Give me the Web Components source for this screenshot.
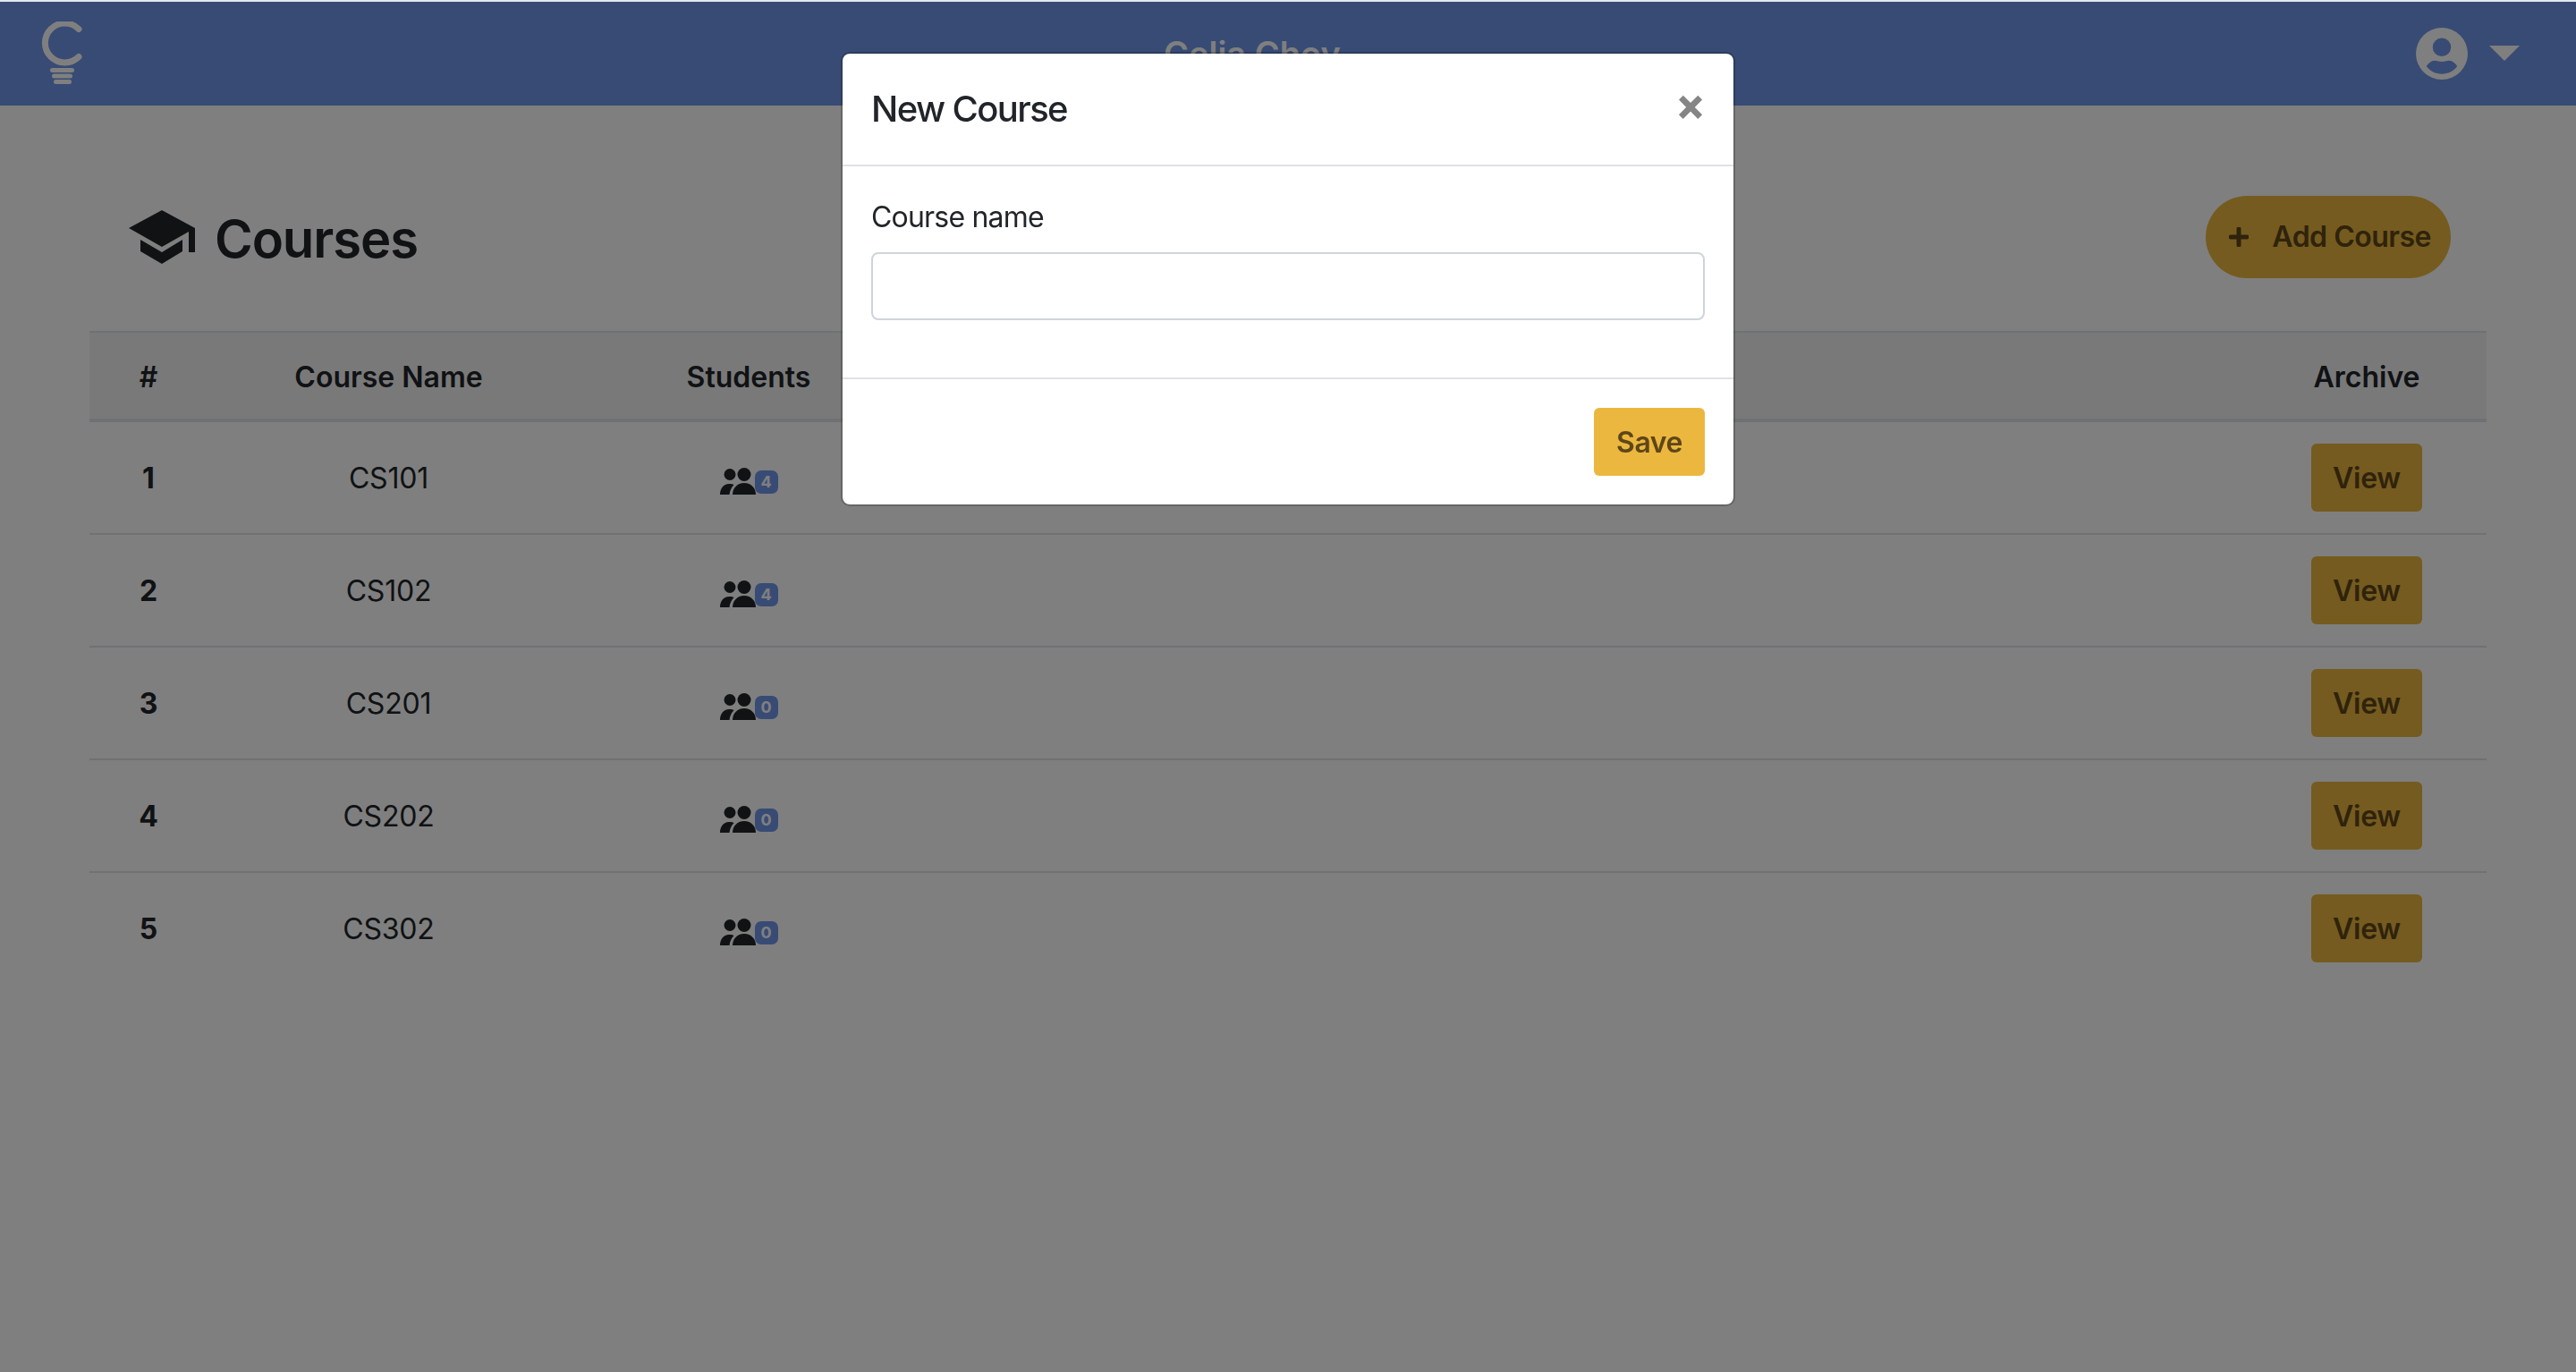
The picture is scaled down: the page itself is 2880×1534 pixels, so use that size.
<!DOCTYPE html>
<html>
<head>
<meta charset="utf-8">
<style>
html, body { margin: 0; height: 100%; }
body {
    background: #fff;
    border-top: 2px solid #e4e8ee;
    box-sizing: border-box;
    font-family: Inter, "Liberation Sans", sans-serif;
    font-size: 32px;
    line-height: 1.5;
    color: #212529;
    overflow: hidden;
}
</style>
</head>
<body>
<app-navbar name="Celia Chov"></app-navbar>
<course-page>
    <course-row num="1" name="CS101" students="4"></course-row>
    <course-row num="2" name="CS102" students="4"></course-row>
    <course-row num="3" name="CS201" students="0"></course-row>
    <course-row num="4" name="CS202" students="0"></course-row>
    <course-row num="5" name="CS302" students="0"></course-row>
</course-page>
<new-course-modal></new-course-modal>

<script>
class AppNavbar extends HTMLElement {
    constructor() {
        super();
        this.attachShadow({ mode: 'open' });
        this.shadowRoot.innerHTML = `
<style>
:host { display: block; }
nav {
    height: 116px;
    background: #6e96e9;
    display: grid;
    grid-template-columns: 1255px auto 1fr;
    align-items: center;
    padding: 0 63px 0 46px;
}
.logo { display: block; }
.name { color: #fff; font-weight: 600; font-size: 38px; line-height: 57px; }
.user { justify-self: end; display: flex; align-items: center; gap: 24px; }
svg { display: block; }
</style>
<nav>
    <svg class="logo" width="46" height="72" viewBox="0 0 46 72">
        <path d="M42 8.500A22 22 0 1 0 42 39.500" fill="none" stroke="#fff" stroke-width="7" stroke-linecap="round"/>
        <rect x="10" y="52" width="27" height="5" rx="2.500" fill="#fff"/>
        <rect x="12" y="58.500" width="23" height="5" rx="2.500" fill="#fff"/>
        <rect x="14" y="65" width="20" height="5" rx="2.500" fill="#fff"/>
    </svg>
    <span class="name"></span>
    <div class="user">
        <svg width="58" height="58" viewBox="0 0 58 58">
            <path fill="#fff" fill-rule="evenodd" d="M29 0a29 29 0 1 1 0 58a29 29 0 0 1 0-58zM29 11.500a10 10 0 1 0 0 20.500a10 10 0 0 0 0-20.500zM11.700 43C14 40 17 36.700 21 36.700C24 36.700 26 38 29 38C32 38 34 36.700 37 36.700C41 36.700 44 40 46.300 43C42 48.500 36 51.700 29 51.700C22 51.700 16 48.500 11.700 43z"/>
        </svg>
        <svg width="34" height="18" viewBox="0 0 34 18"><path d="M0 0h34L17 17z" fill="#fff"/></svg>
    </div>
</nav>`;
        this.shadowRoot.querySelector('.name').textContent = this.getAttribute('name');
    }
}

class CoursePage extends HTMLElement {
    constructor() {
        super();
        this.attachShadow({ mode: 'open' });
        this.shadowRoot.innerHTML = `
<style>
:host { display: block; padding: 0 100px; }
.top {
    display: flex;
    justify-content: space-between;
    align-items: center;
    height: 252px;
    padding: 48px 40px 0 44px;
    box-sizing: border-box;
}
h1 {
    display: flex;
    align-items: center;
    gap: 22px;
    margin: -2px 0 0;
    font-size: 58px;
    line-height: 84px;
    font-weight: 600;
    letter-spacing: -1.1px;
    color: #212529;
}
h1 svg { margin-top: -5px; }
button {
    display: flex;
    align-items: center;
    gap: 26px;
    height: 92px;
    padding: 0 22px 0 26px;
    border: 0;
    border-radius: 46px;
    background: #ebb73f;
    color: #5e4618;
    font: 600 32px Inter, "Liberation Sans", sans-serif;
    letter-spacing: -.5px;
    margin-top: -7px;
}
.head {
    display: grid;
    grid-template-columns: 132px 405px 400px 1fr 268px;
    border-top: 2px solid #dee2e6;
    border-bottom: 4px solid #dee2e6;
    background: #f2f2f2;
    font-weight: 600;
    text-align: center;
}
.head span { padding: 26px 0 22px; }
</style>
<div class="top">
    <h1>
        <svg width="74" height="60" viewBox="0 0 74 60"><path fill="#212529" d="M37 0L74 20L74 47H67V24L37 41L0 20zM13 33L37 47L60 33V46L37 60L13 46z"/></svg>
        Courses
    </h1>
    <button>
        <svg width="22" height="22" viewBox="0 0 22 22"><path d="M11 2v18M2 11h18" stroke="#5e4618" stroke-width="5" stroke-linecap="round"/></svg>
        Add Course
    </button>
</div>
<div class="head">
    <span>#</span><span>Course Name</span><span>Students</span><span></span><span>Archive</span>
</div>
<slot></slot>`;
    }
}

class CourseRow extends HTMLElement {
    constructor() {
        super();
        this.attachShadow({ mode: 'open' });
        this.shadowRoot.innerHTML = `
<style>
:host { display: block; }
:host(:not(:last-child)) .row { border-bottom: 2px solid #dee2e6; }
.row {
    display: grid;
    grid-template-columns: 132px 405px 400px 1fr 268px;
    align-items: center;
    text-align: center;
    height: 124px;
}
.num { font-weight: 700; padding-top: 2px; }
.name { padding-top: 2px; letter-spacing: -.2px; }
.students { display: flex; justify-content: center; align-items: center; padding-top: 8px; }
.badge {
    width: 26px;
    height: 26px;
    margin-left: -1px;
    border-radius: 7px;
    background: #7097ea;
    color: #fff;
    font-size: 18px;
    font-weight: 700;
    line-height: 26px;
    position: relative;
    top: 1px;
}
button {
    width: 124px;
    height: 76px;
    border: 0;
    border-radius: 6px;
    background: #ebb73f;
    color: #5e4618;
    font: 600 32px Inter, "Liberation Sans", sans-serif;
    letter-spacing: -.3px;
    justify-self: center;
}
svg { display: block; }
</style>
<div class="row">
    <span class="num"></span>
    <span class="name"></span>
    <div class="students">
        <svg width="40" height="31" viewBox="0 0 40 31">
            <circle cx="11" cy="7.500" r="6.500" fill="#212529"/>
            <circle cx="27" cy="7.500" r="7.500" fill="#212529"/>
            <path d="M0 30c0-7 4-12 10-12c3 0 5 .6 5.500 1.200C12.500 22 11 26 10.500 30z" fill="#212529"/>
            <path d="M14 30c0-7 5-13 13-13s13 6 13 13z" fill="#212529"/>
        </svg>
        <span class="badge"></span>
    </div>
    <span></span>
    <button>View</button>
</div>`;
        this.shadowRoot.querySelector('.num').textContent = this.getAttribute('num');
        this.shadowRoot.querySelector('.name').textContent = this.getAttribute('name');
        this.shadowRoot.querySelector('.badge').textContent = this.getAttribute('students');
    }
}

class NewCourseModal extends HTMLElement {
    constructor() {
        super();
        this.attachShadow({ mode: 'open' });
        this.shadowRoot.innerHTML = `
<style>
:host { display: block; }
.backdrop {
    position: fixed;
    top: 2px;
    left: 0;
    right: 0;
    bottom: 0;
    background: rgba(0, 0, 0, .5);
}
.modal {
    position: fixed;
    top: 58px;
    left: 940px;
    width: 1000px;
    box-sizing: border-box;
    background: #fff;
    background-clip: padding-box;
    border: 2px solid rgba(0, 0, 0, .2);
    border-radius: 10px;
}
header {
    display: flex;
    justify-content: space-between;
    align-items: flex-start;
    padding: 32px;
    border-bottom: 2px solid #dee2e6;
}
h5 { margin: 0; font-size: 40px; line-height: 60px; font-weight: 500; letter-spacing: -1.6px; }
.close {
    color: #858585;
    font-size: 48px;
    font-weight: 700;
    line-height: 48px;
    font-family: "Liberation Sans", sans-serif;
    -webkit-text-stroke: 1.5px #858585;
    margin: 4px 2px 0 0;
}
.body { padding: 32px; }
label { display: block; margin-bottom: 16px; letter-spacing: -.8px; position: relative; top: 1px; }
input {
    display: block;
    width: 100%;
    height: 76px;
    box-sizing: border-box;
    border: 2px solid #ced4da;
    border-radius: 8px;
    margin-bottom: 32px;
    background: #fff;
}
footer {
    display: flex;
    justify-content: flex-end;
    padding: 32px;
    border-top: 2px solid #dee2e6;
}
button {
    width: 124px;
    height: 76px;
    border: 0;
    border-radius: 6px;
    background: #ebb73f;
    color: #5e4618;
    font: 600 32px Inter, "Liberation Sans", sans-serif;
    letter-spacing: -.5px;
}
</style>
<div class="backdrop"></div>
<div class="modal">
    <header>
        <h5>New Course</h5>
        <span class="close">×</span>
    </header>
    <div class="body">
        <label>Course name</label>
        <input type="text">
    </div>
    <footer><button>Save</button></footer>
</div>`;
    }
}

customElements.define('app-navbar', AppNavbar);
customElements.define('course-page', CoursePage);
customElements.define('course-row', CourseRow);
customElements.define('new-course-modal', NewCourseModal);
</script>
</body>
</html>
